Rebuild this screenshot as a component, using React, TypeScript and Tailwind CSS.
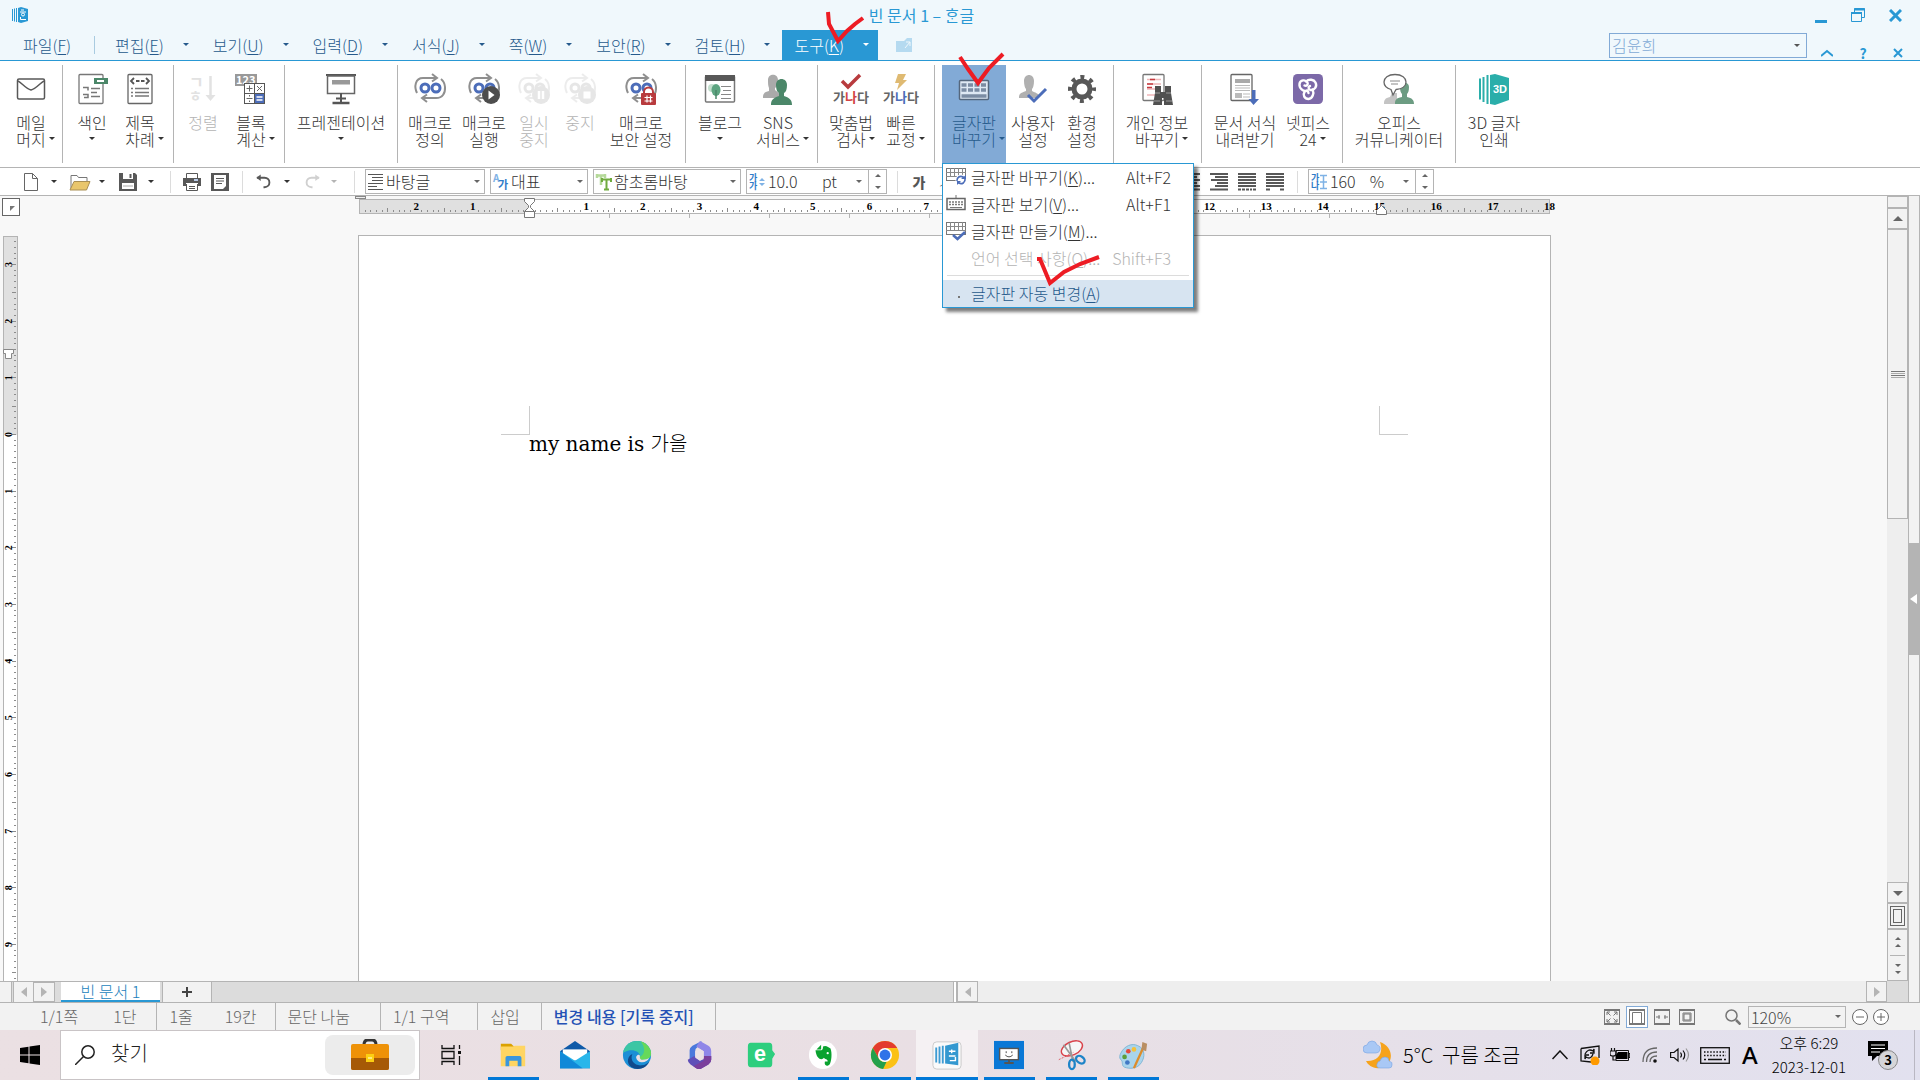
import type { ReactNode } from 'react';
import clsx from 'clsx';

const Arrow = ({ up = false, className = '' }: { up?: boolean; className?: string }) => (
    <svg viewBox="0 0 6 3" className={clsx('h-[3px] w-1.5 shrink-0 fill-current', className)} aria-hidden="true">
        <path d={up ? 'M0 3h6L3 0z' : 'M0 0h6L3 3z'} />
    </svg>
);

const Icon = ({ children, className = 'size-8' }: { children: ReactNode; className?: string }) => (
    <svg viewBox="0 0 32 32" className={clsx('shrink-0 overflow-visible', className)} fill="none" aria-hidden="true">
        {children}
    </svg>
);

const MacroLoop = () => (
    <>
        <path d="M3 20C0 14 1 5 9 5h13M18 1l5 4-5 3.5" stroke="#8f8f8f" strokeWidth="2" />
        <path d="M27 6c5 4 5 12 2 16-2 3-4 3-7 3H9M13 21.5L8 25l5 4" stroke="#8f8f8f" strokeWidth="2" />
        <circle cx="11" cy="15" r="4" stroke="#4c6db9" strokeWidth="3" />
        <circle cx="22" cy="15" r="4" stroke="#4c6db9" strokeWidth="3" />
    </>
);

const MailIcon = () => (
    <Icon>
        <rect x="2.5" y="6" width="27" height="20" rx="1.5" stroke="#585858" strokeWidth="1.5" />
        <path d="M3 8c4 2 8 8 13 9 5-1 9-7 13-9" stroke="#585858" strokeWidth="1.5" />
    </Icon>
);

const IndexIcon = () => (
    <Icon>
        <rect x="3" y="1.5" width="24" height="29" rx="1" stroke="#777" strokeWidth="1.3" />
        <rect x="18" y="5" width="14" height="6" fill="#4b8769" />
        <rect x="21" y="7" width="7" height="2" fill="#fff" />
        <path d="M7 14.5h5v3M7 21.5h5v3H8M15 15.5h9M15 19.5h6M15 23.5h9" stroke="#777" strokeWidth="1.5" />
    </Icon>
);

const TitleListIcon = () => (
    <Icon>
        <rect x="4" y="1.5" width="24" height="29" rx="1" stroke="#666" strokeWidth="1.3" />
        <path d="M10 5L7 8l3 3M22 5l3 3-3 3M12 8h3.5M17 8h3.5" stroke="#555" strokeWidth="1.8" />
        <path d="M7 15.5h2M11 15.5h14M7 19.5h2M11 19.5h14M7 23h2M11 23h14" stroke="#777" strokeWidth="1.5" />
    </Icon>
);

const SortIcon = () => (
    <Icon>
        <text x="2" y="15" fontSize="16" fontWeight="700" fill="#e2e2e2">ㄱ</text>
        <text x="2" y="28" fontSize="14" fontWeight="700" fill="#e2e2e2">ㅎ</text>
        <path d="M23.5 3v20" stroke="#e2e2e2" strokeWidth="2.5" />
        <path d="M18.5 22h10l-5 6z" fill="#e2e2e2" />
    </Icon>
);

const BlockCalcIcon = () => (
    <Icon>
        <rect y="1" width="22" height="12" fill="#999" />
        <text x="1" y="11" fontSize="11" fontWeight="700" fill="#fff">123</text>
        <rect x="9.5" y="10.5" width="20" height="20" fill="#fff" stroke="#555" />
        <rect x="20" y="21" width="9" height="9" fill="#4c6db9" />
        <path d="M19.5 10.5v20M9.5 20.5h20" stroke="#555" />
        <path d="M11.5 15.5h6M14.5 12.5v6M22 13l5 5M27 13l-5 5M11.5 25.5h6M14.5 22v1.5M14.5 27.5V29" stroke="#666" />
        <path d="M21.5 24h6M21.5 27h6" stroke="#fff" strokeWidth="1.5" />
    </Icon>
);

const PresentationIcon = () => (
    <Icon>
        <path d="M1 2h30" stroke="#555" strokeWidth="2" />
        <rect x="2.5" y="3" width="27" height="17.5" stroke="#666" strokeWidth="1.5" />
        <rect x="7" y="7" width="18" height="4.5" fill="#999" />
        <path d="M16 20v9M11 25.5h10" stroke="#555" strokeWidth="2" />
        <path d="M7.5 30h17" stroke="#555" strokeWidth="2.5" />
    </Icon>
);

const MacroIcon = () => (
    <Icon><MacroLoop /></Icon>
);

const MacroRunIcon = () => (
    <Icon>
        <MacroLoop />
        <circle cx="23" cy="22" r="9" fill="#4d4d4d" />
        <path d="M20.5 17.5v9l6-4.5z" fill="#fff" />
    </Icon>
);

const MacroPauseIcon = () => (
    <Icon>
        <g opacity=".16" className="grayscale"><MacroLoop /></g>
        <circle cx="23" cy="22" r="9" fill="#e6e6e6" />
        <path d="M21 18v8M25 18v8" stroke="#fff" strokeWidth="2.5" />
    </Icon>
);

const MacroStopIcon = () => (
    <Icon>
        <g opacity=".16" className="grayscale"><MacroLoop /></g>
        <circle cx="23" cy="22" r="9" fill="#e6e6e6" />
        <rect x="19.5" y="18.5" width="7" height="7" fill="#fff" />
    </Icon>
);

const MacroLockIcon = () => (
    <Icon>
        <MacroLoop />
        <path d="M19 22v-3a4.500 4.500 0 0 1 9 0v3" stroke="#b83b3e" strokeWidth="2" fill="#fff" />
        <rect x="16" y="20" width="15" height="12" rx="1" fill="#b83b3e" />
        <path d="M19.5 24.5h8M19.5 28h8M22 22.5v7M25.5 22.5v7" stroke="#fff" strokeWidth="1.2" />
    </Icon>
);

const BlogIcon = () => (
    <Icon>
        <rect x="1.5" y="3" width="29" height="26" rx="1" fill="#fff" stroke="#777" strokeWidth="1.5" />
        <rect x="1" y="2" width="30" height="6" fill="#585858" />
        <circle cx="8" cy="15" r="4" fill="#c3dfce" />
        <ellipse cx="12" cy="17" rx="4.5" ry="6" fill="#5da581" />
        <path d="M12 17v9" stroke="#4b8769" strokeWidth="1.5" />
        <path d="M17 13.5h10M19 17.5h8M17 21.5h10M17 25.5h10" stroke="#888" strokeWidth="1.2" />
    </Icon>
);

const SnsIcon = () => (
    <Icon>
        <path d="M6 7c0-7 10-7 10 0 0 4-1 7-3 8v2l5 4v4H1c0-4 1-6 6-7v-3c-1-2-1-5-1-8z" fill="#aaa" />
        <path d="M14 12c0-8 11-8 11 0 0 4-1 7-3 8v3c6 2 8 4 8 9H9c0-5 2-7 8-9v-3c-2-1-3-4-3-8z" fill="#4b8769" />
    </Icon>
);

const SpellIcon = () => (
    <Icon>
        <path d="M7 8l6 6L25 2" stroke="#b83b3e" strokeWidth="3.5" />
        <text x="16" y="29" fontSize="13" fontWeight="700" fill="#666" textAnchor="middle">가<tspan fill="#d24444">나</tspan>다</text>
    </Icon>
);

const QuickFixIcon = () => (
    <Icon>
        <path d="M13 1h8l-3 6h4L12 17l2-7h-4z" fill="#dfba72" />
        <text x="16" y="29" fontSize="13" fontWeight="700" fill="#666" textAnchor="middle">가<tspan fill="#4c6db9">나</tspan>다</text>
    </Icon>
);

const KeyboardIcon = () => (
    <Icon>
        <rect x="1.5" y="7.5" width="29" height="19" rx="1" fill="#dfe9f4" stroke="#55677d" strokeWidth="1.5" />
        <path d="M3.5 12h25M3.5 17h25" stroke="#7b8ca3" strokeWidth="3.5" strokeDasharray="5 1.5" />
        <path d="M3.5 23h25" stroke="#7b8ca3" strokeWidth="3.5" />
    </Icon>
);

const UserSetIcon = () => (
    <Icon>
        <path d="M7 8c0-8 10-8 10 0 0 4-1 7-2 8v2c4 2 5 2 7 4v3H2c0-4 1-5 7-7v-2c-1-1-2-4-2-8z" fill="#b0b0b0" />
        <path d="M11 22l6 6L29 16" stroke="#4c6db9" strokeWidth="3" />
    </Icon>
);

const GearIcon = () => (
    <Icon>
        <circle cx="16" cy="16" r="8" stroke="#585858" strokeWidth="5" />
        <circle cx="16" cy="16" r="12" stroke="#585858" strokeWidth="4" strokeDasharray="4 5.425" strokeDashoffset="2" />
    </Icon>
);

const PrivacyIcon = () => (
    <Icon>
        <rect x="2" y="1.5" width="21" height="26" rx="1" stroke="#777" strokeWidth="1.3" />
        <path d="M6 6.500h14M6 11h14M6 16h8M6 22h8" stroke="#f0b7b9" strokeWidth="1.3" />
        <path d="M9 6.500h5M6 11h6M6 14.500h5" stroke="#c43b40" strokeWidth="1.5" />
        <path d="M14 13h6v6h4v-6h6v7l2 12H23v-7h-2v7H12l2-12z" fill="#505050" />
        <path d="M14 20h5M25 20h5M13 28h6M25 28h6" stroke="#999" />
    </Icon>
);

const FormDownIcon = () => (
    <Icon>
        <rect x="2" y="1.5" width="21" height="26" rx="1" stroke="#666" strokeWidth="1.3" />
        <rect x="6" y="6" width="15" height="4" fill="#aaa" />
        <path d="M6 12.5h15M6 15h15M6 17.5h15M14 21h7M14 24h7" stroke="#bbb" />
        <rect x="6" y="20" width="7" height="5" fill="#bbb" />
        <path d="M23 17h3.5v9H30l-5.500 6-5-6H23z" fill="#4c6db9" />
    </Icon>
);

const NetfficeIcon = () => (
    <Icon>
        <rect x="1" y="1" width="30" height="30" rx="4.5" fill="#7c69a8" />
        <g stroke="#fff" strokeWidth="2.4" strokeLinecap="round">
            <path d="M15.500 17.500C11 19 7 15 7.500 11c.5-4 6-5 8-1.500 1 2-1 4-3 3" />
            <path d="M14 8.500c3-3 8-2 9.500 1 2 4-1 8-5 7.500-2.500-.5-2.500-3.500-.5-4" />
            <path d="M20.500 16.500c2 4 0 9-4 9.500-4 0-6-4-4-7 1.500-2 4-1 4 1" />
        </g>
    </Icon>
);

const CommunicatorIcon = () => (
    <Icon>
        <path d="M1 31c0-4 1-6 6-7l2-4h5v11z" fill="#c4c4c4" />
        <path d="M17 14c0-6 9-6 9 0 0 4-1 6-2 7v3c5 1 7 3 7 7H12c0-4 1-6 7-7v-3c-1-1-2-3-2-7z" fill="#6c9c82" />
        <path d="M12 1.500C5 1.500 1 5 1 9s2 6 7 7.500L10 22l3-5.500C19 16 23 13 23 9s-4-7.500-11-7.500z" fill="#fff" stroke="#666" strokeWidth="1.3" />
        <path d="M7 8h10M8 11h7" stroke="#888" />
    </Icon>
);

const ThreeDIcon = () => (
    <Icon>
        <path d="M12 2l5-1 14 4v22l-14 5-5-1z" fill="#2aaeaa" />
        <path d="M9.500 2v29M5.500 4v25M2 5.500v21" stroke="#2aaeaa" strokeWidth="2" />
        <text x="15" y="20" fontSize="11" fontWeight="700" fill="#fff" fontFamily="Liberation Sans">3D</text>
    </Icon>
);

type RibbonItem = {
    lines: string[];
    icon: ReactNode;
    width: string;
    arrow?: boolean;
    disabled?: boolean;
    active?: boolean;
};

const ribbon: { pad: string; items: RibbonItem[] }[] = [
    { pad: '', items: [{ lines: ['메일', '머지'], icon: <MailIcon />, width: 'w-[62px]', arrow: true }] },
    { pad: 'pl-[5px] pr-[9px]', items: [
        { lines: ['색인', ''], icon: <IndexIcon />, width: 'w-12', arrow: true },
        { lines: ['제목', '차례'], icon: <TitleListIcon />, width: 'w-12', arrow: true },
    ] },
    { pad: 'pl-[5px] pr-[9px]', items: [
        { lines: ['정렬'], icon: <SortIcon />, width: 'w-12', disabled: true },
        { lines: ['블록', '계산'], icon: <BlockCalcIcon />, width: 'w-12', arrow: true },
    ] },
    { pad: '', items: [{ lines: ['프레젠테이션', ''], icon: <PresentationIcon />, width: 'w-28', arrow: true }] },
    { pad: 'pl-[5px] pr-[6px]', items: [
        { lines: ['매크로', '정의'], icon: <MacroIcon />, width: 'w-[54px]' },
        { lines: ['매크로', '실행'], icon: <MacroRunIcon />, width: 'w-[54px]' },
        { lines: ['일시', '중지'], icon: <MacroPauseIcon />, width: 'w-[46px]', disabled: true },
        { lines: ['중지'], icon: <MacroStopIcon />, width: 'w-[46px]', disabled: true },
        { lines: ['매크로', '보안 설정'], icon: <MacroLockIcon />, width: 'w-[76px]' },
    ] },
    { pad: 'pl-[5px] pr-[10px]', items: [
        { lines: ['블로그', ''], icon: <BlogIcon />, width: 'w-[58px]', arrow: true },
        { lines: ['SNS', '서비스'], icon: <SnsIcon />, width: 'w-[58px]', arrow: true },
    ] },
    { pad: 'pl-[5px] pr-[11px]', items: [
        { lines: ['맞춤법', '검사'], icon: <SpellIcon />, width: 'w-[56px]', arrow: true },
        { lines: ['빠른', '교정'], icon: <QuickFixIcon />, width: 'w-11', arrow: true },
    ] },
    { pad: 'pl-[7px] pr-[9px]', items: [
        { lines: ['글자판', '바꾸기'], icon: <KeyboardIcon />, width: 'w-16', arrow: true, active: true },
        { lines: ['사용자', '설정'], icon: <UserSetIcon />, width: 'w-[54px]' },
        { lines: ['환경', '설정'], icon: <GearIcon />, width: 'w-11' },
    ] },
    { pad: 'pl-[5px] pr-[6px]', items: [{ lines: ['개인 정보', '바꾸기'], icon: <PrivacyIcon />, width: 'w-[76px]', arrow: true }] },
    { pad: 'pl-[5px] pr-[9px]', items: [
        { lines: ['문서 서식', '내려받기'], icon: <FormDownIcon />, width: 'w-[76px]' },
        { lines: ['넷피스', '24'], icon: <NetfficeIcon />, width: 'w-[50px]', arrow: true },
    ] },
    { pad: '', items: [{ lines: ['오피스', '커뮤니케이터'], icon: <CommunicatorIcon />, width: 'w-28' }] },
    { pad: '', items: [{ lines: ['3D 글자', '인쇄'], icon: <ThreeDIcon />, width: 'w-[76px]' }] },
];

const menus = [
    ['편집', 'E'], ['보기', 'U'], ['입력', 'D'], ['서식', 'J'],
    ['쪽', 'W'], ['보안', 'R'], ['검토', 'H'], ['도구', 'K'],
];

const Hotkey = ({ name, letter, tail = '' }: { name: string; letter: string; tail?: string }) => (
    <span className="whitespace-nowrap">{name}(<span className="underline underline-offset-2">{letter}</span>){tail}</span>
);

const KeyGrid = ({ children }: { children?: ReactNode }) => (
    <svg viewBox="0 0 20 20" className="size-5 overflow-visible" fill="none" aria-hidden="true">
        <rect x=".5" y="1.5" width="19" height="12" stroke="#777" />
        <path d="M0 5.5h20M0 9.5h20M4.5 1v8M8.5 1v8M12.5 1v8M16.5 1v8" stroke="#888" />
        {children}
    </svg>
);

const dropdownItems = [
    {
        name: '글자판 바꾸기', letter: 'K', tail: '...', keys: 'Alt+F2',
        icon: (
            <KeyGrid>
                <circle cx="15" cy="13" r="5.5" fill="#fff" />
                <path d="M11 14a4 4 0 0 1 6-4l1 1M19 12a4 4 0 0 1-6 4l-1-1" stroke="#4c6db9" strokeWidth="1.8" />
                <path d="M15 12h5V8zM15 14h-4v4z" fill="#4c6db9" />
            </KeyGrid>
        ),
    },
    {
        name: '글자판 보기', letter: 'V', tail: '...', keys: 'Alt+F1',
        icon: (
            <svg viewBox="0 0 20 20" className="size-5" fill="none" aria-hidden="true">
                <path d="M10 1v4" stroke="#777" />
                <rect x="1" y="4.5" width="18" height="11" stroke="#666" strokeWidth="1.5" />
                <path d="M3 8h14M3 10.5h14" stroke="#777" strokeWidth="1.5" strokeDasharray="2 1" />
                <path d="M4 13.5h12" stroke="#777" />
            </svg>
        ),
    },
    {
        name: '글자판 만들기', letter: 'M', tail: '...', keys: '',
        icon: <KeyGrid><path d="M7 14l4.500 4L19 11" stroke="#4c6db9" strokeWidth="2.5" /></KeyGrid>,
    },
    { name: '언어 선택 사항', letter: 'O', tail: '...', keys: 'Shift+F3', icon: null, disabled: true },
];

const KeyboardMenu = () => (
    <div role="menu" className="absolute left-0 top-full z-10 w-[252px] border border-[#2998d4] bg-white text-left text-[#333] shadow-[4px_4px_3px_rgba(0,0,0,0.5)]">
        {dropdownItems.map((item) => (
            <button key={item.name} type="button" role="menuitem" disabled={item.disabled}
                className={clsx('flex h-[27px] w-full items-center pb-0.5 pl-[3px] pr-[22px]', item.disabled && 'text-[#b4b4b4]')}>
                <span className="mr-[5px] size-5">{item.icon}</span>
                <Hotkey name={item.name} letter={item.letter} tail={item.tail} />
                <span className="ml-auto">{item.keys}</span>
            </button>
        ))}
        <div className="mx-1 mb-1 mt-[3px] h-px bg-[#dcdcdc]" />
        <button type="button" role="menuitem" className="flex h-[27px] w-full items-center bg-[#d7e4f1] pb-0.5 pl-[3px] text-[#265a8c]">
            <span className="mr-[5px] flex w-5 justify-center pl-1.5 pt-2">
                <span className="size-0.5 bg-[#777]" />
            </span>
            <Hotkey name="글자판 자동 변경" letter="A" />
        </button>
    </div>
);

const RibbonButton = ({ item }: { item: RibbonItem }) => (
    <div className={clsx('relative', item.width)}>
        <button type="button" disabled={item.disabled}
            className={clsx('flex h-[98px] w-full flex-col items-center gap-[9px] pt-2 leading-[17px]',
                item.disabled && 'text-[#b4b4b4]',
                item.active && 'bg-[#82aad6] text-[#265a8c]')}>
            {item.icon}
            <span className="flex flex-col items-center">
                {item.lines.map((line, i) => (
                    <span key={i} className="flex h-[17px] items-center whitespace-nowrap">
                        {line}
                        {item.arrow && i === 1 && (
                            <span className={clsx('flex w-0 overflow-visible pb-0.5', !line && 'justify-center')}>
                                <Arrow className={line ? 'ml-[3px]' : ''} />
                            </span>
                        )}
                    </span>
                ))}
            </span>
        </button>
        {item.active && <KeyboardMenu />}
    </div>
);

const TitleBar = () => (
    <div className="flex h-[30px] items-center pl-3 text-[#2998d4]">
        <svg viewBox="0 0 16 16" className="size-4" aria-hidden="true">
            <path d="M6 1l3-1 7 2v12l-7 2-3-1z" fill="#2998d4" />
            <path d="M4.500 1v14M2.500 1.500v13M.5 2v12" stroke="#2998d4" />
            <path d="M9 3h3M8 5h6" stroke="#fff" />
            <circle cx="11" cy="7.500" r="1.500" fill="none" stroke="#fff" />
            <path d="M8.500 10v2.500H14" fill="none" stroke="#fff" />
        </svg>
        <h1 className="flex-1 text-center font-normal">빈 문서 1 – ᄒᆞᆫ글</h1>
        <div className="flex items-center gap-6 pr-[18px]">
            <button type="button" aria-label="최소화" className="flex h-4 w-3 items-end">
                <span className="h-[3px] w-full bg-[#2998d4]" />
            </button>
            <button type="button" aria-label="이전 크기로">
                <svg viewBox="0 0 14 14" className="size-3.5" fill="none" stroke="#2998d4" aria-hidden="true">
                    <path d="M3.5 4V.5h10v9H11" />
                    <path d="M3 1.5h11M0 5h11" strokeWidth="2" />
                    <path d="M.5 5v8.500h10V5" />
                </svg>
            </button>
            <button type="button" aria-label="닫기">
                <svg viewBox="0 0 13 13" className="size-[13px]" stroke="#2998d4" strokeWidth="3" aria-hidden="true">
                    <path d="M1 1l11 11M12 1L1 12" />
                </svg>
            </button>
        </div>
    </div>
);

const MenuBar = () => (
    <nav className="flex h-[31px] items-center border-b border-[#2998d4] text-[#265a8c]">
        <button type="button" className="pl-[23px] pr-[23px]"><Hotkey name="파일" letter="F" /></button>
        <span className="mr-2 h-[18px] w-px bg-[#a9cbe0]" />
        {menus.map(([name, letter]) => (
            <button key={name} type="button"
                className={clsx('mr-[3px] flex h-full items-center gap-[19px] pl-3 pr-[9px]', letter === 'K' && 'bg-[#2998d4] text-white')}>
                <Hotkey name={name} letter={letter} />
                <Arrow className="mb-0.5" />
            </button>
        ))}
        <button type="button" aria-label="화면 전환" className="ml-[15px]">
            <svg viewBox="0 0 16 14" className="h-3.5 w-4" fill="#b5daf0" aria-hidden="true">
                <path d="M0 3h8l3-3h5v14H0z" />
                <path d="M9 10l5-6M10 4h4v4" stroke="#f0f8fc" fill="none" />
            </svg>
        </button>
        <div className="ml-auto flex h-[25px] w-[198px] items-center border border-[#82aad6] pl-0.5 pr-1.5 text-[#82aad6]">
            <select aria-label="사용자" className="flex-1 appearance-none bg-transparent">
                <option>김윤희</option>
            </select>
            <Arrow className="text-[#555]" />
        </div>
        <div className="ml-3.5 mr-[17px] flex items-center gap-[26px] self-end pb-0.5 text-[#2998d4]">
            <button type="button" aria-label="리본 접기">
                <svg viewBox="0 0 12 10" className="h-2.5 w-3" fill="none" stroke="currentColor" strokeWidth="2" aria-hidden="true">
                    <path d="M0 8l6-5 6 5" />
                </svg>
            </button>
            <button type="button" className="w-2 text-sm font-bold leading-[10px]">?</button>
            <button type="button" aria-label="문서 닫기">
                <svg viewBox="0 0 10 10" className="size-2.5" stroke="currentColor" strokeWidth="2" aria-hidden="true">
                    <path d="M1 1l8 8M9 1L1 9" />
                </svg>
            </button>
        </div>
    </nav>
);

const Ribbon = () => (
    <div className="flex border-b border-[#b4b4b4] bg-white py-1">
        {ribbon.map((group, i) => (
            <div key={i} className={clsx('flex', group.pad, i < ribbon.length - 1 && 'box-content border-r border-[#b4b4b4]')}>
                {group.items.map((item, j) => <RibbonButton key={j} item={item} />)}
            </div>
        ))}
    </div>
);

const ToolIcon = ({ label, children, width = 'w-[18px]' }: { label: string; children: ReactNode; width?: string }) => (
    <button type="button" aria-label={label} className={clsx('h-[18px] shrink-0', width)}>
        <svg viewBox="0 0 18 18" className="h-[18px] w-full overflow-visible" fill="none" stroke="#585858" aria-hidden="true">
            {children}
        </svg>
    </button>
);

const Divider = ({ className = '' }: { className?: string }) => (
    <span className={clsx('h-[22px] w-px shrink-0 bg-[#dcdcdc]', className)} />
);

const Combo = ({ label, value, width, icon }: { label: string; value: string; width: string; icon: ReactNode }) => (
    <div className={clsx('mr-[5px] flex h-[25px] shrink-0 items-center border border-[#b4b4b4] pl-0.5 pr-1', width)}>
        <svg viewBox="0 0 16 16" className="mr-0.5 size-4 shrink-0 overflow-visible" fill="none" aria-hidden="true">{icon}</svg>
        <select aria-label={label} className="min-w-0 flex-1 appearance-none bg-transparent pb-px">
            <option>{value}</option>
        </select>
        <Arrow className="text-[#666]" />
    </div>
);

const NumberBox = ({ label, value, unit, width, icon }: { label: string; value: string; unit: string; width: string; icon: ReactNode }) => (
    <div className={clsx('flex h-[25px] shrink-0 border border-[#b4b4b4]', width)}>
        <div className="flex min-w-0 flex-1 items-center pl-0.5 pr-1.5">
            <svg viewBox="0 0 16 16" className="mr-[3px] size-4 shrink-0 overflow-visible" fill="none" aria-hidden="true">{icon}</svg>
            <input aria-label={label} defaultValue={value} className="w-0 min-w-0 flex-1 bg-transparent pb-px" />
            <span className="mr-[19px] pb-px">{unit}</span>
            <Arrow className="text-[#666]" />
        </div>
        <div className="flex w-[18px] flex-col items-center justify-around border-l border-[#b4b4b4] text-[#666]">
            <button type="button" aria-label={label + ' 늘리기'} className="flex h-2 items-center"><Arrow up /></button>
            <button type="button" aria-label={label + ' 줄이기'} className="flex h-2 items-center"><Arrow /></button>
        </div>
    </div>
);

const Toolbar = () => (
    <div className="flex h-7 items-center border-b border-[#b4b4b4] bg-white pl-[23px]">
        <ToolIcon label="새 문서">
            <path d="M1.5.5h8l5 5v12h-13z" stroke="#666" /><path d="M9.5.5v5h5" stroke="#666" />
        </ToolIcon>
        <Arrow className="ml-2.5 mr-[13px]" />
        <ToolIcon label="불러오기" width="w-5">
            <path d="M0 16V2.5h6l1.500 2H16V8" stroke="#777" /><path d="M-1 17l4-8.500h16L15.500 17z" fill="#e9c66c" stroke="#a98f55" />
        </ToolIcon>
        <Arrow className="ml-[9px] mr-3.5" />
        <ToolIcon label="저장하기">
            <path d="M0 0h16l2 2v16H0z" fill="#585858" stroke="none" /><path d="M4 0h10v6H4zM3 10h12v6H3z" fill="#fff" stroke="none" />
            <path d="M11.5 1v4" strokeWidth="2" /><path d="M4 13h10" stroke="#aaa" />
        </ToolIcon>
        <Arrow className="ml-[11px] mr-4" />
        <Divider className="mr-3" />
        <ToolIcon label="인쇄">
            <path d="M3.5 5V.5h11V5" /><path d="M0 5h18v8h-3v-3H3v3H0z" fill="#585858" stroke="none" />
            <path d="M3.5 11v6.500h11V11M6 13.5h6M6 15.5h6" /><path d="M11 7h4" stroke="#b9cbe8" strokeWidth="2" />
        </ToolIcon>
        <ToolIcon label="미리 보기" width="ml-2.5 w-[18px]">
            <rect width="18" height="18" fill="#585858" stroke="none" /><path d="M3 2h12v11l-3 3H3z" fill="#fff" stroke="none" />
            <path d="M5 5.5h8M5 8h8M5 10.5h6" />
        </ToolIcon>
        <Divider className="ml-[13px] mr-3" />
        <ToolIcon label="되돌리기" width="w-[17px]">
            <path d="M6 1L1.500 4.500 6 8z" fill="#585858" stroke="none" /><path d="M2 4.500h8c7 0 7 10 0 10H9" strokeWidth="2" />
        </ToolIcon>
        <Arrow className="ml-3 mr-3.5" />
        <ToolIcon label="다시 실행" width="w-[17px]">
            <path d="M12 1l4.500 3.500L12 8z" fill="#d0d0d0" stroke="none" /><path d="M16 4.500H8c-7 0-7 10 0 10h1" strokeWidth="2" stroke="#d0d0d0" />
        </ToolIcon>
        <Arrow className="ml-2.5 mr-[17px] text-[#b4b4b4]" />
        <Divider className="mr-2.5" />
        <Combo label="스타일" value="바탕글" width="w-[120px]"
            icon={<path d="M0 .5h15M4 3.5h11M4 6.5h11M0 9.5h15M0 12.5h9M0 15.5h15" stroke="#555" />} />
        <Combo label="언어" value="대표" width="w-[98px]"
            icon={<><text x="0" y="8" fontSize="10" fontWeight="700" fill="#7fb2e5">A</text><text x="5" y="15" fontSize="11" fontWeight="700" fill="#2f7cc9">가</text></>} />
        <Combo label="글꼴" value="함초롬바탕" width="w-[148px]"
            icon={<><path d="M0 1.5h10M5 1v10M1 0v4M9 0v4" stroke="#b5d99a" strokeWidth="2.5" /><path d="M5 5.5h11M10.5 5v11M6 4v4M15 4v4M8 15.5h5" stroke="#70ab3f" strokeWidth="2" /></>} />
        <NumberBox label="글자 크기" value="10.0" unit="pt" width="w-[141px]"
            icon={<><text x="0" y="7" fontSize="9" fontWeight="700" fill="#2f7cc9">가</text><text x="0" y="15" fontSize="9" fontWeight="700" fill="#2f7cc9">가</text><path d="M10 7l3-3 3 3zM10 9l3 3 3-3z" fill="#7fb2e5" /></>} />
        <Divider className="ml-2.5 mr-3" />
        <button type="button" aria-label="진하게" className="w-[18px] text-sm font-black text-[#555]">가</button>
        <button type="button" aria-label="기울임" className="ml-2 w-[18px] text-sm italic text-[#555]">가</button>
        <span className="w-[228px]" />
        {[
            ['가운데 정렬', 'M0 1h18M4 4h11M0 7h18M4 10h11M0 13h18M4 16.5h14'],
            ['오른쪽 정렬', 'M0 1h18M5 4h13M1 7h17M7 10h11M5 13h13M0 16.5h18'],
            ['배분 정렬', 'M0 1h18M0 4h18M0 7h18M0 10h18M0 13h18M0 16.5h3M4 16.5h3M8 16.5h3M12 16.5h2M15 16.5h3'],
            ['나눔 정렬', 'M0 1h18M0 4h18M0 7h18M0 10h18M0 13h18M0 16.5h4M14 16.5h4'],
        ].map(([label, d]) => (
            <ToolIcon key={label} label={label} width="mr-2.5 w-[18px]"><path d={d} strokeWidth="1.8" /></ToolIcon>
        ))}
        <Divider className="ml-[3px] mr-2.5" />
        <NumberBox label="줄 간격" value="160" unit="%" width="w-[126px]"
            icon={<><text x="0" y="7" fontSize="9" fontWeight="700" fill="#2f7cc9">가</text><text x="0" y="15" fontSize="9" fontWeight="700" fill="#2f7cc9">나</text><path d="M9 1.5h7M9 8h7M9 14.5h7M12.5 1v14" stroke="#7fb2e5" strokeWidth="1.5" /></>} />
    </div>
);

const CM = 56.67;
const range = (from: number, to: number) => Array.from({ length: to - from + 1 }, (_, i) => from + i);

const HorizontalRuler = () => (
    <svg className="h-6 w-[1191px] overflow-visible" aria-hidden="true">
        <rect x=".5" y="3.5" width="1190" height="14" fill="#e0e0e0" stroke="#b4b4b4" />
        <rect x="170" y="4" width="851" height="13" fill="#fff" />
        <rect x="-3.5" y=".5" width="10" height="2" fill="#eee" stroke="#888" />
        {range(-29, 179).map((n) => {
            const x = Math.round(170 + n * CM / 10);
            const len = n % 10 === 0 ? 0 : n % 5 === 0 ? 4 : 2;
            return <path key={n} d={`M${x + 0.5} ${16 - len}v${len}`} stroke="#8c8c8c" />;
        })}
        {range(1, 10).map((n) => <path key={n} d={`M${170.5 + n * 80} 18v4`} stroke="#b4b4b4" />)}
        {range(-2, 18).filter((n) => n !== 0).map((n) => (
            <text key={n} x={170.5 + n * CM} y="14" fontSize="11" fontWeight="700" textAnchor="middle" fontFamily="Liberation Serif">{Math.abs(n)}</text>
        ))}
        <path d="M165.5 2.5h10v3l-4 4v2l4 4v6h-10v-6l4-4v-2l-4-4zM165.5 15.5h10" fill="#fff" stroke="#777" />
        <path d="M1017.5 18.5v-4l5-5 5 5v4z" fill="#fff" stroke="#777" />
    </svg>
);

const VerticalRuler = () => (
    <svg className="ml-[3px] w-[19px] self-stretch overflow-hidden" height="100%" aria-hidden="true">
        <rect x=".5" y="1.5" width="14" height="2000" fill="#fff" stroke="#b4b4b4" />
        <rect x="1" y="2" width="13" height="198" fill="#e0e0e0" />
        {range(-34, 131).map((n) => {
            const y = Math.round(199 + n * CM / 10);
            const len = n % 5 === 0 ? 4 : 2;
            return <path key={n} d={`M${13 - len} ${y + 0.5}h${len}`} stroke="#8c8c8c" />;
        })}
        {range(-3, 9).map((n) => (
            <text key={n} transform={`translate(9 ${199.5 + n * CM}) rotate(-90)`} fontSize="10" fontWeight="700" textAnchor="middle" fontFamily="Liberation Serif">{Math.abs(n)}</text>
        ))}
        <path d="M.5 114.5h10v4h-2v5h-6v-5h-2z" fill="#fff" stroke="#888" />
    </svg>
);

const Page = () => (
    <article className="w-[1193px] border border-b-0 border-[#b4b4b4] bg-white px-[142px] pt-[170px]">
        <div className="flex justify-between" aria-hidden="true">
            <span className="h-[29px] w-[29px] border-b border-r border-[#ccc]" />
            <span className="h-[29px] w-[29px] border-b border-l border-[#ccc]" />
        </div>
        <p className="px-7 font-['DejaVu_Serif','Noto_Sans_CJK_KR',serif] text-xl leading-[18px] text-black">my name is 가을</p>
    </article>
);

const box = 'flex items-center justify-center border border-[#b4b4b4] bg-[#f2f2f2] text-[#666]';

const Tri = ({ d, className = 'size-2.5' }: { d: string; className?: string }) => (
    <svg viewBox="0 0 10 10" className={clsx('fill-current', className)} aria-hidden="true"><path d={d} /></svg>
);

const VerticalScroll = () => (
    <div className="flex w-[21px] flex-col bg-[#eee]">
        <button type="button" aria-label="화면 나누기" className={clsx(box, 'h-3')} />
        <button type="button" aria-label="위로" className={clsx(box, 'h-[21px]')}><Tri d="M0 7h10L5 2z" /></button>
        <div className={clsx(box, 'h-[290px]')}>
            <span className="flex w-3.5 flex-col gap-px">
                <span className="h-px bg-[#777]" /><span className="h-px bg-[#aaa]" /><span className="h-px bg-[#777]" /><span className="h-px bg-[#aaa]" />
            </span>
        </div>
        <div className="flex-1" />
        <button type="button" aria-label="아래로" className={clsx(box, 'h-[21px]')}><Tri d="M0 3h10L5 8z" /></button>
        <button type="button" aria-label="쪽 보기" className={clsx(box, 'h-[26px]')}>
            <span className="flex h-5 w-[15px] items-center justify-center border border-[#666]"><span className="h-3.5 w-[9px] border border-[#666]" /></span>
        </button>
        <div className={clsx(box, 'h-[52px] flex-col gap-2')}>
            <button type="button" aria-label="이전 쪽" className="flex flex-col gap-1"><Arrow up /><Arrow up /></button>
            <span className="h-px w-[15px] bg-[#b4b4b4]" />
            <button type="button" aria-label="다음 쪽" className="flex flex-col gap-1"><Arrow /><Arrow /></button>
        </div>
    </div>
);

const DocTabs = () => (
    <div className="flex h-[22px] border-b border-[#b4b4b4] bg-[#dcdcdc]">
        <div className="flex min-w-0 flex-1 border-t border-[#b4b4b4]">
            <span className="mr-px w-3 border-r border-[#b4b4b4] bg-[#f2f2f2]" />
            <button type="button" aria-label="이전 탭" className="flex w-[21px] items-center justify-center border border-y-0 border-[#b4b4b4] bg-[#f2f2f2] text-[#b4b4b4]"><Tri d="M8 0v10L2 5z" /></button>
            <button type="button" aria-label="다음 탭" className="flex w-[21px] items-center justify-center border border-l-0 border-[#b4b4b4] bg-[#f2f2f2] text-[#b4b4b4]"><Tri d="M2 0v10l6-5z" /></button>
            <button type="button" className="ml-1.5 w-[99px] border-b-2 border-[#2998d4] bg-white leading-4 text-[#1b7fbd]">빈 문서 1</button>
            <button type="button" aria-label="새 탭" className="ml-0.5 flex w-[50px] items-center justify-center border-x border-[#b4b4b4] bg-[#f2f2f2]">
                <svg viewBox="0 0 10 10" className="size-2.5" stroke="#444" strokeWidth="2" aria-hidden="true"><path d="M0 5h10M5 0v10" /></svg>
            </button>
            <span className="ml-auto w-1 border-x border-[#b4b4b4] bg-white" />
        </div>
        <div className="flex w-[52%] max-w-[951px] bg-[#eee]">
            <button type="button" aria-label="왼쪽으로" className={clsx(box, 'w-[21px] !text-[#b4b4b4]')}><Tri d="M8 0v10L2 5z" /></button>
            <span className="flex-1" />
            <button type="button" aria-label="오른쪽으로" className={clsx(box, 'w-[21px] !text-[#b4b4b4]')}><Tri d="M2 0v10l6-5z" /></button>
            <span className="w-[21px] bg-[#dcdcdc]" />
        </div>
    </div>
);

const Workspace = () => (
    <div className="flex flex-1 bg-[#f8f8f8]">
        <div className="flex min-w-0 flex-1 flex-col">
            <div className="flex min-h-[785px] flex-1">
                <main className="flex min-w-0 flex-1 flex-col">
                    <div className="flex h-[39px]">
                        <div className="flex w-[22px] shrink-0 pl-0.5 pt-0.5">
                            <button type="button" aria-label="탭 종류" className="flex size-[18px] items-center justify-center border border-[#666] bg-white">
                                <svg viewBox="0 0 6 6" className="ml-0.5 mt-0.5 size-[5px]" fill="#777" aria-hidden="true"><path d="M0 0h6L0 6z" /></svg>
                            </button>
                        </div>
                        <div className="flex flex-1 justify-center"><HorizontalRuler /></div>
                    </div>
                    <div className="flex flex-1">
                        <div className="flex w-[22px] shrink-0"><VerticalRuler /></div>
                        <div className="flex flex-1 justify-center"><Page /></div>
                    </div>
                </main>
                <VerticalScroll />
            </div>
            <DocTabs />
        </div>
        <aside className="flex w-3 flex-col border-x border-b border-[#b4b4b4] bg-[#f2f2f2] pt-[347px]">
            <button type="button" aria-label="작업 창 펼치기" className="flex h-28 items-center justify-center bg-[#b4b4b4] text-white">
                <Tri d="M8 0v10L1 5z" className="h-3 w-2.5" />
            </button>
        </aside>
    </div>
);

const StatusIcon = ({ label, d, active = false }: { label: string; d: string; active?: boolean }) => (
    <button type="button" aria-label={label} className={clsx('flex size-[22px] items-center justify-center', active && 'border border-[#82aad6] bg-white')}>
        <svg viewBox="0 0 16 16" className="size-4 shrink-0" fill="none" stroke="#777" aria-hidden="true">
            <rect x=".5" y=".5" width="15" height="15" /><path d="M0 1h16M0 15h16" strokeWidth="2" /><path d={d} />
        </svg>
    </button>
);

const statusCell = 'flex h-full items-center border-r border-[#b4b4b4] pb-0.5';

const StatusBar = () => (
    <footer className="flex h-[27px] items-center bg-[#f2f2f2] text-[#666]">
        <div className={clsx(statusCell, 'gap-[35px] pl-10 pr-5')}><span>1/1쪽</span><span>1단</span></div>
        <div className={clsx(statusCell, 'gap-8 pl-3 pr-[18px]')}><span>1줄</span><span>19칸</span></div>
        <div className={clsx(statusCell, 'pl-3 pr-[30px]')}>문단 나눔</div>
        <div className={clsx(statusCell, 'pl-3 pr-7')}>1/1 구역</div>
        <div className={clsx(statusCell, 'pl-3 pr-[21px]')}>삽입</div>
        <div className={clsx(statusCell, 'pl-3 pr-[21px] font-medium text-[#2451b5]')}>변경 내용 [기록 중지]</div>
        <div className="ml-auto flex items-center gap-[3px] pr-[31px]">
            <StatusIcon label="전체 화면" d="M3 3l3.5 3.5M13 3L9.500 6.500M3 13l3.500-3.500M13 13L9.500 9.500M3 6V3h3M10 3h3v3M3 10v3h3M13 10v3h-3" />
            <StatusIcon label="쪽 맞춤" active d="M3.5 3.5h9v12h-9z" />
            <StatusIcon label="폭 맞춤" d="M2 8h4M10 8h4M5 6v4M11 6v4" />
            <StatusIcon label="두 쪽 맞춤" d="M4 4h8v8H4zM5 5h6v6H5z" />
            <svg viewBox="0 0 16 16" className="ml-6 mr-1 size-4" fill="none" stroke="#777" strokeWidth="1.5" aria-hidden="true">
                <circle cx="6.5" cy="6.5" r="5.5" /><path d="M11 11l4.500 4.500" strokeWidth="2.5" />
            </svg>
            <div className="flex h-[22px] w-[98px] items-center border border-[#b4b4b4] pl-0.5 pr-1">
                <select aria-label="확대 배율" className="min-w-0 flex-1 appearance-none bg-transparent text-[#444]"><option>120%</option></select>
                <Arrow />
            </div>
            <button type="button" aria-label="축소" className="ml-[3px] mr-0.5">
                <svg viewBox="0 0 16 16" className="size-4" fill="#fff" stroke="#666" aria-hidden="true"><circle cx="8" cy="8" r="7.5" /><path d="M4 8h8" /></svg>
            </button>
            <button type="button" aria-label="확대">
                <svg viewBox="0 0 16 16" className="size-4" fill="#fff" stroke="#666" aria-hidden="true"><circle cx="8" cy="8" r="7.5" /><path d="M4 8h8M8 4v8" /></svg>
            </button>
        </div>
    </footer>
);

const apps: { label: string; icon: ReactNode; running?: boolean; active?: boolean }[] = [
    {
        label: '파일 탐색기', running: true,
        icon: <><path d="M3 4h11l3 3v4H3z" fill="#dba100" /><path d="M3 7h13l2-1h11v22H3z" fill="#ffd562" /><path d="M8 28V19q0-2 2-2h13q2 0 2 2v9h-4v-6h-9v6z" fill="#3a96dd" /></>,
    },
    {
        label: '메일',
        icon: <><path d="M0 12L16 1l16 11v18H0z" fill="#0f5aa8" /><path d="M3 10h26v12H3z" fill="#fff" /><path d="M0 12l16 10L32 12v18H0z" fill="#29b6ea" /><path d="M0 12l24 18H0z" fill="#1189d8" /></>,
    },
    {
        label: 'Edge',
        icon: <><circle cx="16" cy="16" r="15" fill="#1b8fd6" /><path d="M1 14C3 4 10 1 16 1c9 0 15 7 15 13 0 5-4 7-9 7-3 0-4-1-3-3 1-5-6-8-11-7-4 1-6 2-7 3z" fill="#3cc6a4" /><path d="M20 1.500c7 2 11 8 11 12.500 0 5-4 7-9 7-3 0-4-1-3-3 6-3 6-10 1-16.500z" fill="#66d95a" /><path d="M11 15c-3 7 3 13 10 12 4 0 6-2 8-4-3 7-10 9-16 7.500C5 28 4 18 11 15z" fill="#114a8b" /><path d="M15 18c2-4 5-2 4 0 0 2 1 3 3 3 3 0 5-.5 7-2-2 6-13 7-14-1z" fill="#eae0e4" /></>,
    },
    {
        label: 'Microsoft 365',
        icon: <><path d="M19 1L9 6q-3 2-3 5v10l6-3v-6q0-3 3-5z" fill="#4a78dc" /><path d="M17 1l9 5q3 2 3 6v9l-8-4v-5l-8-5z" fill="#8f86e8" /><path d="M4 21l7-4 6 5 12-5v4q0 3-3 5l-7 4q-3 2-6 0l-6-4q-3-2-3-5z" fill="#5f4fb8" /><path d="M29 17v4q0 3-3 5l-7 4q-3 2-6 0l-3-2 11-6v-5z" fill="#7b3f9c" /><path d="M12 12l4-3 5 3v7l-4 3-5-3z" fill="#eae0e4" /></>,
    },
    {
        label: 'e',
        icon: <><path d="M5 3h20q3 0 3 4v4l3 4-3 5v5q0 4-3 4H5q-3 0-3-4V7q0-4 3-4z" fill="#2dce7e" /><text x="15" y="22" fontSize="23" fontWeight="700" fill="#fff" textAnchor="middle" fontFamily="Liberation Sans">e</text></>,
    },
    {
        label: 'Evernote', running: true,
        icon: <><circle cx="16" cy="16" r="15" fill="#fff" /><path d="M9 10l5-5v5zM8 11h6q2 0 2-4c3-2 6 1 8 2 2 5 1 14-1 17-3 3-6 1-5-3h3c0-3-3-2-4-4-2 3-8 2-9-8z" fill="#0aa22f" /><circle cx="21" cy="14" r="1.2" fill="#fff" /></>,
    },
    {
        label: 'Chrome', running: true,
        icon: <><circle cx="16" cy="16" r="15" fill="#fbc116" /><path d="M3 8.500A15 15 0 0 1 29 8.500H16L9.500 20z" fill="#e33b2e" /><path d="M3 8.500l6.500 11.500c2 3 5 3.500 8 3.500L14 31A15 15 0 0 1 3 8.500z" fill="#23a04b" /><circle cx="16" cy="16" r="7.5" fill="#fff" /><circle cx="16" cy="16" r="5.8" fill="#2f73e8" /></>,
    },
    {
        label: '한글', active: true,
        icon: <><rect x="1" y="2" width="30" height="29" rx="4" fill="#fafafa" stroke="#c9c9c9" /><path d="M14 6l14-3v24l-14-2z" fill="#3398d0" /><path d="M11.500 6v19M8 7v18M4.500 8v16" stroke="#3e9cd3" strokeWidth="2" /><path d="M18 17h7M18 12h7M21 10v4M25 18v4h-6" stroke="#fff" strokeWidth="1.5" /></>,
    },
    {
        label: '원격 화면', running: true,
        icon: <><path d="M0 1h32v30H0z" fill="#0a78d6" /><rect x="6" y="9" width="20" height="12" fill="#fff" stroke="#555" strokeWidth="1.5" /><path d="M16 21v4M11 24.500h10" stroke="#555" strokeWidth="2" /><path d="M13 12v2M19 12v2M12 16q4 4 8 0" stroke="#444" /></>,
    },
    {
        label: '캡처 도구', running: true,
        icon: <><ellipse cx="17" cy="9" rx="12" ry="7" transform="rotate(-25 17 9)" fill="#f6f6f6" stroke="#d9434b" strokeWidth="1.5" /><path d="M3 21q8-4 16-8" stroke="#d9434b" strokeDasharray="2 1.5" /><path d="M8 5l13 18M14 3l4 20" stroke="#999" strokeWidth="1.8" /><ellipse cx="17" cy="26" rx="3" ry="5" stroke="#1d84c8" strokeWidth="2.5" /><ellipse cx="26" cy="21" rx="5" ry="3.5" transform="rotate(35 26 21)" stroke="#1d84c8" strokeWidth="2.5" /></>,
    },
    {
        label: '그림판', running: true,
        icon: <><path d="M3 14C7 6 15 3 21 6c8 3 8 12 4 18-4 7-13 7-18 5-4-2-1-6-4-8-2-2-1-5 0-7z" fill="#a9d4ec" stroke="#7fb4d3" /><circle cx="7" cy="18" r="2.5" fill="#5c9e3a" /><circle cx="11" cy="12" r="2.5" fill="#e5483c" /><circle cx="17" cy="10" r="2.5" fill="#f4c13a" /><circle cx="10" cy="24" r="2.5" fill="#4078c4" /><path d="M17 30L27 8" stroke="#dd8c2b" strokeWidth="2.5" /><path d="M25 10l1-8 5 2-1 8z" fill="#b98e63" /></>,
    },
];

const TaskBar = () => (
    <div className="flex h-[50px] items-stretch bg-linear-to-r from-[#ebe0e3] via-[#e9dfe4] to-[#e2e1ef] text-black">
        <button type="button" aria-label="시작" className="flex w-[60px] items-center justify-center">
            <svg viewBox="0 0 20 20" className="size-5" aria-hidden="true"><path d="M0 3l8.500-1.200v7.700H0zM9.500 1.600L20 0v9.500H9.500zM0 10.500h8.500v7.700L0 17zM9.500 10.500H20V20L9.500 18.400z" /></svg>
        </button>
        <label className="flex w-[360px] items-center border border-[#c9c4c6] bg-white pl-3.5 pr-1">
            <svg viewBox="0 0 20 20" className="mr-4 size-5 shrink-0" fill="none" stroke="#222" strokeWidth="1.5" aria-hidden="true"><circle cx="13" cy="7" r="6.2" /><path d="M8.500 11.500L0 20" /></svg>
            <input type="text" aria-label="찾기" placeholder="찾기" className="w-0 flex-1 pb-1 text-xl placeholder:text-[#222]" />
            <span className="flex h-10 w-[90px] items-center justify-center rounded-lg bg-[#ececec]">
                <svg viewBox="0 0 38 32" className="h-8 w-[38px]" aria-hidden="true">
                    <path d="M13 6q0-5 4-5h4q4 0 4 5" fill="none" stroke="#333" strokeWidth="3" />
                    <rect y="5" width="38" height="26" rx="2" fill="#ee9208" /><path d="M0 19h38v10q0 2-2 2H2q-2 0-2-2z" fill="#a65a06" />
                    <rect x="15" y="15" width="8" height="8" fill="#fccf12" /><path d="M17 18h4v2h-4z" fill="#ffe97a" />
                </svg>
            </span>
        </label>
        <button type="button" aria-label="작업 보기" className="flex w-[62px] items-center justify-center">
            <svg viewBox="0 0 20 20" className="size-5" fill="none" stroke="#111" strokeWidth="1.3" aria-hidden="true">
                <path d="M1 0v3.500h12V0M1 20v-3.500h12V20M1 6.500h12v7H1zM18.500 0v4M18.500 11v9" /><path d="M17 6h3v3h-3z" fill="#111" stroke="none" />
            </svg>
        </button>
        {apps.map((app) => (
            <button key={app.label} type="button" aria-label={app.label}
                className={clsx('flex w-[62px] flex-col items-center justify-between pt-2.5', app.active && 'bg-[#f5f1f3]')}>
                <Icon className="size-[30px]">{app.icon}</Icon>
                <span className={clsx('h-[3px]', app.active ? 'w-full bg-[#0078d7]' : 'w-[51px]', app.running && 'bg-[#0078d7]')} />
            </button>
        ))}
        <div className="ml-auto flex items-center">
            <svg viewBox="0 0 30 30" className="mr-2.5 size-[30px]" aria-hidden="true">
                <path d="M17 2c15 5 14 24 0 26-7 1-12-3-14-7 12 1 18-8 14-19z" fill="#f6a31c" />
                <path d="M4 13q-4 0-4-4t4-4q1-4 5-4t5 4q4 1 3 5-1 3-4 3z" fill="#a9c8f5" stroke="#7ba5e2" strokeWidth=".6" />
                <path d="M17 28q-4 0-3-4 1-3 3-3 1-4 5-4t4 4q4 1 3 4 0 3-3 3z" fill="#a9c8f5" stroke="#7ba5e2" strokeWidth=".6" />
            </svg>
            <span className="mr-8 whitespace-nowrap text-xl">5°C&nbsp; 구름 조금</span>
            <svg viewBox="0 0 16 10" className="mr-3 h-2.5 w-4" fill="none" stroke="#111" strokeWidth="1.5" aria-hidden="true"><path d="M.5 9L8 1l7.500 8" /></svg>
            <svg viewBox="0 0 20 20" className="mr-2.5 size-5" fill="none" stroke="#111" strokeWidth="1.3" aria-hidden="true">
                <path d="M1 3.500L19 1v12M1 3.500V16l10 1M5 9q3-6 8-3l1-2v4h-4M13 9q-2 6-7 3l-1 2v-4h4" /><circle cx="15" cy="16" r="4.5" fill="#ff9a00" stroke="none" />
            </svg>
            <svg viewBox="0 0 20 16" className="mr-3 h-4 w-5" aria-hidden="true">
                <path d="M6 3.500h12.500v10H6zM19 6.500h1v4h-1z" stroke="#111" fill="none" /><path d="M8 5h9.500v7H6V8z" /><path d="M0 4h6v3q0 2-3 2t-3-2zM1.500 1v3M4.500 1v3M3 9v4h3" stroke="#111" fill="none" strokeWidth="1.2" />
            </svg>
            <svg viewBox="0 0 16 16" className="mr-3 size-4" fill="none" stroke="#666" strokeWidth="1.3" aria-hidden="true">
                <path d="M1 15Q1 1 15 1M4.500 15Q4.500 5 15 5M8 15q0-6 7-6" /><circle cx="13" cy="14" r="1.8" fill="#111" stroke="none" />
            </svg>
            <svg viewBox="0 0 20 16" className="mr-2.5 h-4 w-5" fill="none" stroke="#111" strokeWidth="1.2" aria-hidden="true">
                <path d="M.6 5.500H4L8 2v12l-4-3.500H.6zM10.500 5.500q2 2.500 0 5M13 3.500q3.500 4.500 0 9" /><path d="M16 1.500q5 6.500 0 13" stroke="#999" />
            </svg>
            <svg viewBox="0 0 30 17" className="mr-3 h-[17px] w-[30px]" fill="none" stroke="#111" strokeWidth="1.3" aria-hidden="true">
                <rect x=".7" y=".7" width="28.6" height="15.6" /><path d="M4 5h22M4 8.500h22" strokeDasharray="1.5 1.6" /><path d="M4 12.500h2M8 12.500h14M24 12.500h2" />
            </svg>
            <span className="mr-3.5 font-['Noto_Sans'] text-2xl font-medium">A</span>
            <div className="mr-[22px] text-center text-[15px] leading-6">
                <div>오후 6:29</div>
                <div>2023-12-01</div>
            </div>
            <button type="button" aria-label="알림" className="mr-4">
                <svg viewBox="0 0 30 30" className="size-[30px]" aria-hidden="true">
                    <path d="M0 1h20v15H9l-5 5v-5H0z" /><path d="M3 5h14M3 8.500h14M3 12h9" stroke="#fff" strokeWidth="1.2" />
                    <circle cx="20" cy="20" r="9.5" fill="#d5d5d8" stroke="#888" /><text x="20" y="25" fontSize="13" fontWeight="600" textAnchor="middle">3</text>
                </svg>
            </button>
            <span className="h-full w-1.5 border-l border-[#b9b7c2]" />
        </div>
    </div>
);

// hand drawn ticks that point at the steps to follow
const RedMarks = () => (
    <svg className="pointer-events-none absolute left-0 top-0 z-20 h-80 w-full" fill="none" stroke="#ed1c24" strokeWidth="4" aria-hidden="true">
        <path d="M828 12l1 12 9 17 9-10 8-7 8-6" />
        <path d="M960 57l8 12 10 14 11-15 14-14" />
        <path d="M1037 259h3l10 24 14-11 16-8 19-7" />
    </svg>
);

export default function App() {
    return (
        <div className="relative flex min-h-screen flex-col font-['Noto_Sans_CJK_KR',sans-serif] text-base font-light leading-5 text-[#333]">
            <header className="bg-[#f0f8fc]">
                <TitleBar />
                <MenuBar />
            </header>
            <Ribbon />
            <Toolbar />
            <Workspace />
            <StatusBar />
            <TaskBar />
            <RedMarks />
        </div>
    );
}
